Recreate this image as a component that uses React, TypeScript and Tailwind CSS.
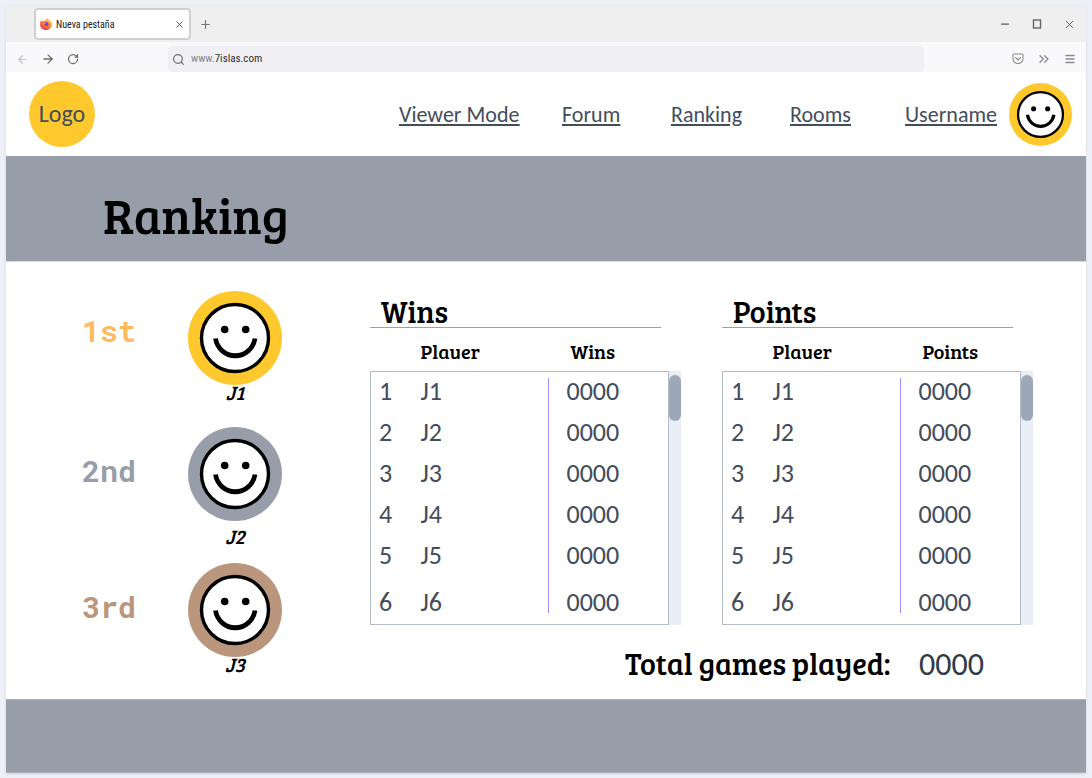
import React from "react";
import { ArrowLeft, ArrowRight, ChevronsRight, Menu, Minus, Plus, RotateCw, Search, X } from "lucide-react";

const SERIF = "font-['Bree_Serif','DejaVu_Serif_Condensed','DejaVu_Serif',serif]";
const MONO = "font-['Roboto_Mono','DejaVu_Sans_Mono',monospace]";
const CHROME = "font-['Roboto_Condensed','Liberation_Sans_Narrow','Open_Sans',sans-serif]";

function Smiley({ className }: { className: string }) {
  return (
    <svg viewBox="0 0 94 94" className={className} aria-hidden="true">
      <circle cx="47" cy="47" r="47" fill="currentColor" />
      <circle cx="47" cy="47" r="33.5" fill="#fff" stroke="#000" strokeWidth="3.4" />
      <circle cx="36.7" cy="38.5" r="3.8" />
      <circle cx="57.7" cy="38.5" r="3.8" />
      <path d="M27.5 47.500A20 20.500 0 0 0 67 47.500" fill="none" stroke="#000" strokeWidth="4.800" />
    </svg>
  );
}

function FirefoxMark() {
  return (
    <svg viewBox="0 0 24 24" className="size-3 shrink-0" aria-hidden="true">
      <defs>
        <linearGradient id="flame" x1="0.8" y1="0" x2="0.2" y2="1">
          <stop offset="0" stopColor="#ffe14d" />
          <stop offset="0.45" stopColor="#ff8a2a" />
          <stop offset="1" stopColor="#f0255f" />
        </linearGradient>
      </defs>
      <path d="M15 0c1 3 7 5 8.500 11C24 19 19 24 12 24S0 19 0 12c0-4 1-6 3-8l1 3c2-2 4-2 6-2 1-2 3-4 5-5z" fill="url(#flame)" />
      <circle cx="12.500" cy="12.500" r="4.500" fill="#7a45d6" />
      <path d="M5 9c3-1 5 0 8 2-3 0-3 2-5 3 1 3 5 3 7 1-1 5-9 5-10-1z" fill="#ff7a2e" />
    </svg>
  );
}

function PocketMark() {
  return (
    <svg viewBox="0 0 24 24" className="size-3" fill="none" stroke="currentColor" strokeWidth="2.200" strokeLinecap="round" strokeLinejoin="round" aria-hidden="true">
      <path d="M4 2h16a2 2 0 0 1 2 2v7a10 10 0 0 1-20 0V4a2 2 0 0 1 2-2z" />
      <path d="M7 9l5 5 5-5" />
    </svg>
  );
}

function BrowserChrome() {
  return (
    <div className={`${CHROME} text-[10px] text-[#202024]`}>
      <div className="flex h-9 items-center bg-[#efefef] pl-7">
        <div className="flex h-8 w-[157px] items-center gap-1 rounded border-2 border-[#d0d0d0] bg-white pr-1 pl-1">
          <FirefoxMark />
          <span className="flex-1 whitespace-nowrap">Nueva pestaña</span>
          <button type="button" aria-label="Close tab" className="text-[#4a4a4c]"><X size={11} strokeWidth={2} /></button>
        </div>
        <button type="button" aria-label="New tab" className="ml-2 text-[#77777a]"><Plus size={13} strokeWidth={2.200} /></button>
        <div className="ml-auto flex items-center gap-5 pr-2.5 text-[#5a5a5c]">
          <button type="button" aria-label="Minimize"><Minus size={12} strokeWidth={2.500} /></button>
          <button type="button" aria-label="Maximize">
            <svg viewBox="0 0 12 12" className="size-3" fill="none" stroke="currentColor" strokeWidth="1.300" aria-hidden="true">
              <rect x="2.500" y="2" width="7" height="8" />
            </svg>
          </button>
          <button type="button" aria-label="Close window"><X size={13} strokeWidth={1.800} /></button>
        </div>
      </div>
      <div className="flex h-[30px] items-center bg-[#f9f9fb] pt-1 text-[#6b6b75]">
        <div className="flex w-[162px] items-center gap-3 pl-2.5">
          <button type="button" aria-label="Back" className="text-[#c3c3c8]"><ArrowLeft size={13} strokeWidth={2.200} /></button>
          <button type="button" aria-label="Forward"><ArrowRight size={14} strokeWidth={2.200} /></button>
          <button type="button" aria-label="Reload"><RotateCw size={12} strokeWidth={2.500} /></button>
        </div>
        <label className="flex h-[26px] flex-1 items-center rounded-sm bg-[#f0f0f4] pl-1">
          <Search size={13} strokeWidth={2.200} />
          <span className="ml-1.5 text-[11px] text-[#85858c]">www.</span>
          <input aria-label="Address" defaultValue="7islas.com" className="min-w-0 flex-1 bg-transparent text-[11px] text-[#303034] outline-none" />
        </label>
        <div className="flex w-[162px] items-center justify-end gap-3 pr-2.5 text-[#8a8a91]">
          <button type="button" aria-label="Pocket"><PocketMark /></button>
          <button type="button" aria-label="More tools"><ChevronsRight size={16} strokeWidth={2} /></button>
          <button type="button" aria-label="Menu"><Menu size={12} strokeWidth={3} /></button>
        </div>
      </div>
    </div>
  );
}

const podium = [
  { place: "1st", name: "J1", color: "text-[#ffb95e]", ring: "text-[#ffc82c]", lift: "pt-4", gap: "pt-0" },
  { place: "2nd", name: "J2", color: "text-[#979eaa]", ring: "text-[#979eaa]", lift: "pt-5", gap: "pt-2" },
  { place: "3rd", name: "J3", color: "text-[#b9967c]", ring: "text-[#b9967c]", lift: "pt-5", gap: "pt-0" },
];

const players = ["J1", "J2", "J3", "J4", "J5", "J6"];

function ScoreTable({ title }: { title: string }) {
  return (
    <section className="w-[312px]">
      <h2 className={`${SERIF} h-[35px] pt-px pl-[11px] text-[30px] leading-9 text-black`}>{title}</h2>
      <div className="h-px w-[291px] bg-[#a78bfa]" />
      <div className="relative flex items-end">
        <table className="w-[299px] table-fixed border-collapse text-left">
          <colgroup>
            <col className="w-[50px]" />
            <col className="w-[146px]" />
            <col />
          </colgroup>
          <thead className={`${SERIF} text-[20px] text-black`}>
            <tr className="h-[43px]">
              <th aria-label="Position" />
              <th className="p-0 font-normal">
                <span className="block h-5 overflow-hidden leading-6">Player</span>
              </th>
              <th className="p-0 pl-1 font-normal">
                <span className="block h-5 leading-6">{title}</span>
              </th>
            </tr>
          </thead>
          <tbody className="border border-[#b4bcca] font-[Carlito,Lato,sans-serif] text-[26px] leading-7 text-[#434d5b]">
            {players.map((name, i) => (
              <tr key={name} className="h-[41px] *:pb-0.5 last:h-[48px] last:*:pt-1 last:*:pb-0">
                <td className="pt-0 pr-0 pl-2">{i + 1}</td>
                <td className="px-0 pt-0">{name}</td>
                <td className="px-0 pt-0">0000</td>
              </tr>
            ))}
          </tbody>
        </table>
        <div className="absolute bottom-3 left-[178px] h-[235px] w-px bg-[#a78bfa]" />
        <div className="h-[254px] w-3 bg-[#e9edf6] pt-1">
          <div className="h-[46px] rounded-full bg-[#9ca7b8]" />
        </div>
      </div>
    </section>
  );
}

export default function App() {
  return (
    <div className="min-h-screen bg-[#edf1f7] px-1.5 pt-1.5 pb-[5px] font-[Carlito,Lato,sans-serif]">
      <div className="bg-white shadow-sm">
        <BrowserChrome />
        <header className="flex h-[84px] items-center pr-3.5 pl-[23px] text-[22px] text-[#434d5b]">
          <a href="#home" className="flex size-[66px] items-center justify-center rounded-full bg-[#ffc82c] text-[24px]">Logo</a>
          <nav className="ml-auto grid grid-cols-[163px_109px_119px_115px_104px] underline underline-offset-2">
            <a href="#viewer">Viewer Mode</a>
            <a href="#forum">Forum</a>
            <a href="#ranking">Ranking</a>
            <a href="#rooms">Rooms</a>
            <a href="#user">Username</a>
          </nav>
          <Smiley className="size-[63px] text-[#ffc82c]" />
        </header>
        <div className="flex h-[106px] items-center border-b border-[#d5d9e0] bg-[#979eaa] pt-3 pl-[97px]">
          <h1 className={`${SERIF} text-[49px] leading-[60px] text-black`}>Ranking</h1>
        </div>
        <main className="flex h-[437px] pt-[29px] pl-[76px]">
          <ol className="w-[288px]">
            {podium.map((p) => (
              <li key={p.name} className="flex h-[136px]">
                <span className={`${MONO} ${p.color} ${p.lift} w-[106px] text-[30px] leading-[48px] font-bold`}>{p.place}</span>
                <div className="flex flex-col items-center">
                  <Smiley className={`size-[94px] shrink-0 ${p.ring}`} />
                  <span className={`${SERIF} ${p.gap} text-[20px] leading-[14px] text-black italic`}>{p.name}</span>
                </div>
              </li>
            ))}
          </ol>
          <div>
            <div className="flex gap-10 pt-[1px]">
              <ScoreTable title="Wins" />
              <ScoreTable title="Points" />
            </div>
            <p className="mt-4 flex items-baseline pl-[255px] whitespace-nowrap">
              <span className={`${SERIF} w-[294px] text-[30px] leading-11 text-black`}>Total games played:</span>
              <span className="text-[32px] leading-11 text-[#303a49]">0000</span>
            </p>
          </div>
        </main>
        <footer className="h-[74px] border-y border-[#aab1bc] bg-[#979eaa]" />
      </div>
    </div>
  );
}
